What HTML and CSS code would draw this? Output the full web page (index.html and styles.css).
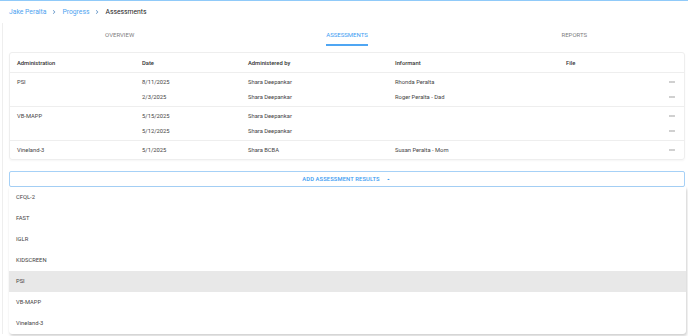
FILE: index.html
```html
<!DOCTYPE html>
<html lang="en">
<head>
    <meta charset="UTF-8">
    <meta name="viewport" content="width=device-width, initial-scale=1.0">
    <title>Assessments - Jake Peralta</title>
    <link rel="stylesheet" href="styles.css">
</head>
<body>
    <nav class="breadcrumb">
        <a href="#">Jake Peralta</a>
        <svg class="crumb-sep" viewBox="0 0 24 24"><path d="M10 6L8.59 7.41 13.17 12l-4.58 4.59L10 18l6-6z"/></svg>
        <a href="#">Progress</a>
        <svg class="crumb-sep" viewBox="0 0 24 24"><path d="M10 6L8.59 7.41 13.17 12l-4.58 4.59L10 18l6-6z"/></svg>
        <span class="current">Assessments</span>
    </nav>

    <div class="content">
        <div class="tabs">
            <div class="tab"><span>Overview</span></div>
            <div class="tab active"><span>Assessments</span></div>
            <div class="tab"><span>Reports</span></div>
        </div>

        <div class="card">
            <div class="row head">
                <div>Administration</div>
                <div>Date</div>
                <div>Administered by</div>
                <div>Informant</div>
                <div>File</div>
                <div></div>
            </div>

            <!-- one group per administration -->
            <div class="group">
                <div class="row">
                    <div>PSI</div>
                    <div>8/11/2025</div>
                    <div>Shara Deepankar</div>
                    <div>Rhonda Peralta</div>
                    <div></div>
                    <div class="more"><svg viewBox="0 0 24 24"><path d="M6 10c-1.1 0-2 .9-2 2s.9 2 2 2 2-.9 2-2-.9-2-2-2zm12 0c-1.1 0-2 .9-2 2s.9 2 2 2 2-.9 2-2-.9-2-2-2zm-6 0c-1.1 0-2 .9-2 2s.9 2 2 2 2-.9 2-2-.9-2-2-2z"/></svg></div>
                </div>
                <div class="row">
                    <div></div>
                    <div>2/3/2025</div>
                    <div>Shara Deepankar</div>
                    <div>Roger Peralta - Dad</div>
                    <div></div>
                    <div class="more"><svg viewBox="0 0 24 24"><path d="M6 10c-1.1 0-2 .9-2 2s.9 2 2 2 2-.9 2-2-.9-2-2-2zm12 0c-1.1 0-2 .9-2 2s.9 2 2 2 2-.9 2-2-.9-2-2-2zm-6 0c-1.1 0-2 .9-2 2s.9 2 2 2 2-.9 2-2-.9-2-2-2z"/></svg></div>
                </div>
            </div>
            <div class="group">
                <div class="row">
                    <div>VB-MAPP</div>
                    <div>5/15/2025</div>
                    <div>Shara Deepankar</div>
                    <div></div>
                    <div></div>
                    <div class="more"><svg viewBox="0 0 24 24"><path d="M6 10c-1.1 0-2 .9-2 2s.9 2 2 2 2-.9 2-2-.9-2-2-2zm12 0c-1.1 0-2 .9-2 2s.9 2 2 2 2-.9 2-2-.9-2-2-2zm-6 0c-1.1 0-2 .9-2 2s.9 2 2 2 2-.9 2-2-.9-2-2-2z"/></svg></div>
                </div>
                <div class="row">
                    <div></div>
                    <div>5/12/2025</div>
                    <div>Shara Deepankar</div>
                    <div></div>
                    <div></div>
                    <div class="more"><svg viewBox="0 0 24 24"><path d="M6 10c-1.1 0-2 .9-2 2s.9 2 2 2 2-.9 2-2-.9-2-2-2zm12 0c-1.1 0-2 .9-2 2s.9 2 2 2 2-.9 2-2-.9-2-2-2zm-6 0c-1.1 0-2 .9-2 2s.9 2 2 2 2-.9 2-2-.9-2-2-2z"/></svg></div>
                </div>
            </div>
            <div class="group">
                <div class="row">
                    <div>Vineland-3</div>
                    <div>5/1/2025</div>
                    <div>Shara BCBA</div>
                    <div>Susan Peralta - Mom</div>
                    <div></div>
                    <div class="more"><svg viewBox="0 0 24 24"><path d="M6 10c-1.1 0-2 .9-2 2s.9 2 2 2 2-.9 2-2-.9-2-2-2zm12 0c-1.1 0-2 .9-2 2s.9 2 2 2 2-.9 2-2-.9-2-2-2zm-6 0c-1.1 0-2 .9-2 2s.9 2 2 2 2-.9 2-2-.9-2-2-2z"/></svg></div>
                </div>
            </div>
        </div>

        <button class="add-btn">
            Add Assessment Results
            <svg viewBox="0 0 24 24"><path d="M7 14l5-5 5 5z"/></svg>
        </button>
        <ul class="menu">
            <li>CFQL-2</li>
            <li>FAST</li>
            <li>IGLR</li>
            <li>KIDSCREEN</li>
            <li class="hover">PSI</li>
            <li>VB-MAPP</li>
            <li>Vineland-3</li>
        </ul>
    </div>
</body>
</html>
```

FILE: styles.css
```css
body {
    margin: 0;
    font-family: Roboto, "Liberation Sans", sans-serif;
    color: #333;
    background-color: #fff;
    border-top: 1px solid #90caf9;
    height: 335px;
    overflow: hidden;
}

.breadcrumb {
    height: 22px;
    display: flex;
    align-items: center;
    padding-left: 9px;
    font-size: 6.8px;
}

.breadcrumb a {
    color: #4da3f0;
    text-decoration: none;
}

.breadcrumb .current {
    color: #222;
}

.crumb-sep {
    width: 8px;
    height: 8px;
    margin: 0 4px;
    fill: #5b8fc4;
}

.content {
    margin-left: 2px;
    border-left: 1px solid #eee;
    padding: 0 3px 0 6px;
}

.tabs {
    display: grid;
    grid-template-columns: 1fr 1fr 1fr;
    margin: 0 -3px 0 -3px;
}

.tab {
    display: flex;
    justify-content: center;
}

.tab span {
    padding: 8px 0 5px;
    line-height: 8px;
    font-size: 6px;
    text-transform: uppercase;
    color: #808080;
    border-bottom: 2px solid transparent;
}

.tab.active span {
    color: #3c9cf2;
    border-bottom-color: #4fa6f3;
}

.card {
    margin-top: 6px;
    border: 1px solid #eee;
    border-radius: 3px;
    box-shadow: 0 1px 2px rgba(0, 0, 0, 0.04);
    font-size: 5.8px;
    color: #444;
}

.row {
    display: grid;
    grid-template-columns: 125px 106px 147px 171px 1fr 24px;
    align-items: center;
    height: 15px;
    padding-left: 7px;
}

.row.head {
    height: 19px;
    font-weight: 500;
    color: #333;
}

.group {
    border-top: 1px solid #eee;
    padding: 1px 0 2px;
}

.more {
    display: flex;
    justify-content: center;
}

.more svg {
    width: 8px;
    height: 8px;
    fill: #777;
}

.add-btn {
    display: flex;
    align-items: center;
    justify-content: center;
    width: 100%;
    height: 16px;
    margin-top: 11px;
    padding: 0;
    background: #fff;
    border: 1px solid #a6d1f7;
    border-radius: 2px;
    font-family: inherit;
    font-size: 5.8px;
    font-weight: 500;
    letter-spacing: 0.02em;
    text-transform: uppercase;
    color: #3c9cf2;
}

.add-btn svg {
    width: 7px;
    height: 7px;
    margin-left: 5px;
    fill: #3c9cf2;
}

.menu {
    list-style: none;
    margin: 0 -1px 0 0;
    padding: 0;
    background: #fff;
    border-radius: 0 0 3px 3px;
    box-shadow: 1px 2px 3px rgba(0, 0, 0, 0.18), 0 0 1px rgba(0, 0, 0, 0.1);
}

.menu li {
    height: 21px;
    line-height: 21px;
    padding-left: 7px;
    font-size: 5.8px;
    color: #444;
}

.menu li.hover {
    background-color: #e8e8e8;
}
```
